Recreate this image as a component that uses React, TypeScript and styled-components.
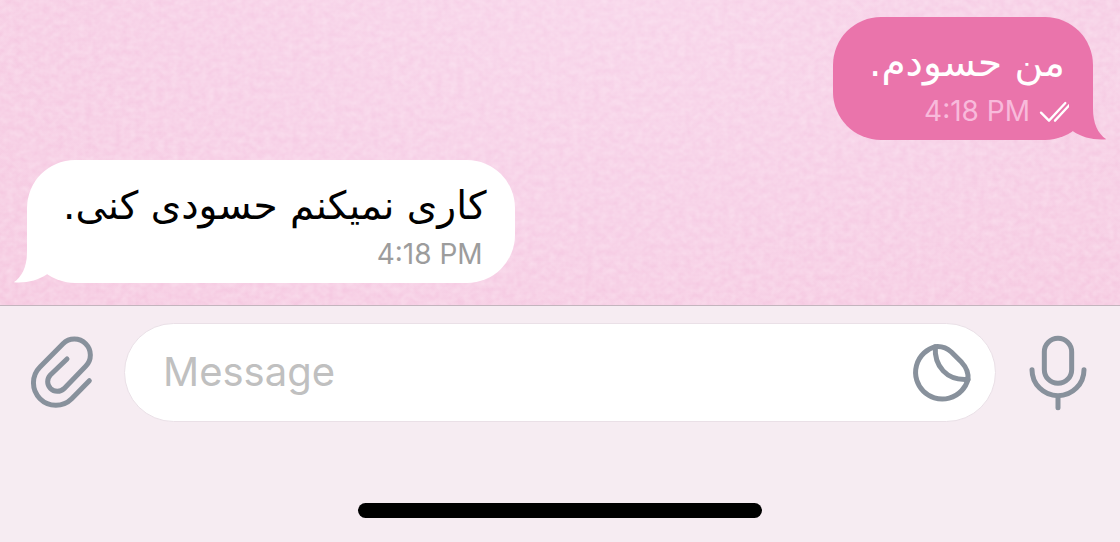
import React from "react";
import styled, { createGlobalStyle } from "styled-components";

const GlobalStyle = createGlobalStyle`
  *, *::before, *::after { box-sizing: border-box; }
  html, body, #root { height: 100%; }
  body {
    margin: 0;
    background: #f6ecf2;
    font-family: Inter, "DejaVu Sans", sans-serif;
  }
`;

const Screen = styled.div`
  display: flex;
  flex-direction: column;
  min-height: 100%;
`;

const Chat = styled.main`
  position: relative;
  isolation: isolate;
  display: flex;
  flex-direction: column;
  gap: 20px;
  padding: 17px 27px 22px;
  overflow: hidden;
  background: radial-gradient(ellipse at 54% 0%, #f7d3e9 0%, #f6cde5 50%, #f5c7df 100%);
  border-bottom: 1px solid #c4b4be;
`;

const Paper = styled.svg`
  position: absolute;
  inset: 0;
  z-index: -1;
  width: 100%;
  height: 100%;
`;

const Bubble = styled.article<{ $own?: boolean }>`
  position: relative;
  display: flex;
  flex-direction: column;
  align-self: ${(p) => (p.$own ? "flex-end" : "flex-start")};
  padding: 20px 28px 12px 36px;
  border-radius: 48px;
  background: ${(p) => (p.$own ? "#ea74ab" : "#ffffff")};
  color: ${(p) => (p.$own ? "#ffffff" : "#000000")};
`;

const BubbleText = styled.p`
  margin: 0;
  height: 58px;
  font-family: "DejaVu Sans", sans-serif;
  font-size: 39px;
  line-height: 52px;
  white-space: nowrap;
`;

const Meta = styled.footer<{ $own?: boolean }>`
  display: flex;
  align-items: center;
  justify-content: flex-end;
  gap: 8px;
  height: 33px;
  margin-right: ${(p) => (p.$own ? "-8px" : "4px")};
  font-size: 28px;
  line-height: 33px;
  color: ${(p) => (p.$own ? "#f8badb" : "#9c9c9c")};
`;

const Tail = styled.svg<{ $own?: boolean }>`
  position: absolute;
  bottom: 0;
  width: 40px;
  height: 60px;
  fill: ${(p) => (p.$own ? "#ea74ab" : "#ffffff")};
  ${(p) => (p.$own ? "right: -16px;" : "left: -16px; transform: scaleX(-1);")}
`;

const Composer = styled.form`
  display: grid;
  grid-template-columns: 124px 1fr 124px;
  align-items: center;
  padding-top: 17px;
`;

const IconButton = styled.button`
  display: flex;
  align-items: center;
  justify-content: center;
  flex: none;
  justify-self: center;
  padding: 0;
  border: 0;
  background: none;
  color: #88919c;
  cursor: pointer;
`;

const Field = styled.div`
  display: flex;
  align-items: center;
  height: 99px;
  padding: 0 21px 0 38px;
  border: 1px solid #eae0e7;
  border-radius: 50px;
  background: #ffffff;
`;

const MessageInput = styled.input`
  flex: 1;
  min-width: 0;
  padding: 0 0 2px;
  border: 0;
  outline: 0;
  background: none;
  font: 400 40px/48px Inter, "DejaVu Sans", sans-serif;
  color: #000000;
  &::placeholder { color: #c0c0c0; opacity: 1; }
`;

const HomeBar = styled.div`
  width: 36%;
  height: 15px;
  margin: 81px auto 24px;
  border-radius: 8px;
  background: #000000;
`;

const line = {
  fill: "none",
  stroke: "currentColor",
  strokeWidth: 15,
  strokeLinecap: "round" as const,
  strokeLinejoin: "round" as const,
};

const ClipIcon = () => (
  <svg width="74" height="80" viewBox="42 40 222 240" aria-hidden="true" {...line}>
    <path d="M235 183 L182 237 A67 67 0 0 1 87 142 L156 72 A48 48 0 0 1 224 140 L159 207 A29 29 0 0 1 118 166 L168 118" />
  </svg>
);

const StickerIcon = () => (
  <svg width="64" height="64" viewBox="90 90 192 192" aria-hidden="true" {...line}>
    <path d="M166 107 A80 80 0 1 0 264 205 C266 184 259 169 245 154 L214 123 C200 110 185 105 166 107 Z" />
    <path d="M166 107 C162 165 200 210 264 205" />
  </svg>
);

const MicIcon = () => (
  <svg width="64" height="80" viewBox="440 68 192 240" aria-hidden="true" {...line}>
    <rect x="495" y="84" width="82" height="135" rx="41" />
    <path d="M458 178 A78 78 0 0 0 614 178 M536 256 V292" />
  </svg>
);

const ReadIcon = () => (
  <svg width="35" height="22" viewBox="51 34 105 66" role="img" aria-label="Read" fill="none" stroke="#ffffff" strokeWidth="7" strokeLinecap="round" strokeLinejoin="round">
    <path d="M60 69 L84 93 L133 40 M102 93 L151 40" />
  </svg>
);

type MessageProps = { text: string; time: string; own?: boolean };

const Message = ({ text, time, own }: MessageProps) => (
  <Bubble $own={own}>
    <BubbleText dir="rtl" lang="fa">{text}</BubbleText>
    <Meta $own={own}>
      <time>{time}</time>
      {own && <ReadIcon />}
    </Meta>
    <Tail $own={own} viewBox="745 240 120 180" aria-hidden="true">
      <path d="M745 240 H817 V325 C817 370 831 401 857 418 C820 421 785 413 757 394 L745 380 Z" />
    </Tail>
  </Bubble>
);

export default function App() {
  return (
    <Screen>
      <GlobalStyle />
      <Chat>
        <Paper aria-hidden="true">
          <filter id="grain" x="0" y="0" width="100%" height="100%">
            <feTurbulence type="fractalNoise" baseFrequency="0.14 0.16" numOctaves="2" seed="11" />
            <feColorMatrix values="0 0 0 0 1  0 0 0 0 0.91  0 0 0 0 0.95  0.5 0 0 0 -0.08" />
          </filter>
          <rect width="100%" height="100%" filter="url(#grain)" />
        </Paper>
        <Message own text="من حسودم." time="4:18 PM" />
        <Message text="کاری نمیکنم حسودی کنی." time="4:18 PM" />
      </Chat>
      <Composer onSubmit={(e) => e.preventDefault()}>
        <IconButton type="button" aria-label="Attach"><ClipIcon /></IconButton>
        <Field>
          <MessageInput type="text" placeholder="Message" aria-label="Message" />
          <IconButton type="button" aria-label="Stickers"><StickerIcon /></IconButton>
        </Field>
        <IconButton type="button" aria-label="Record voice"><MicIcon /></IconButton>
      </Composer>
      <HomeBar />
    </Screen>
  );
}
